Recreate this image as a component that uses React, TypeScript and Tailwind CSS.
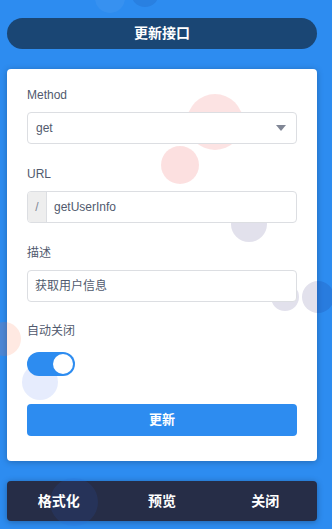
import React from "react";

const Bubble = ({ x, y, r, color }: { x: number; y: number; r: number; color: string }) => (
  <div
    className="absolute rounded-full pointer-events-none z-10"
    style={{ left: x - r, top: y - r, width: r * 2, height: r * 2, background: color }}
  />
);

const Label = ({ children }: { children: React.ReactNode }) => (
  <div className="h-[18px] leading-[18px] text-[12px] text-[#515a6e] mb-[8px]">{children}</div>
);

export default function App() {
  return (
    <div
      className="relative w-[332px] min-h-[529px] bg-[#2d8cf0] overflow-hidden"
      style={{ fontFamily: '"Liberation Sans", "Noto Sans CJK SC", sans-serif' }}
    >
      <Bubble x={110} y={-2} r={15} color="rgba(255,255,255,0.05)" />
      <Bubble x={145} y={-7} r={14} color="rgba(20,40,120,0.12)" />
      <Bubble x={215} y={122} r={28} color="rgba(237,64,64,0.15)" />
      <Bubble x={180} y={165} r={19} color="rgba(237,64,64,0.16)" />
      <Bubble x={249} y={224} r={18} color="rgba(20,10,100,0.12)" />
      <Bubble x={285} y={297} r={14} color="rgba(20,10,100,0.12)" />
      <Bubble x={318} y={297} r={16} color="rgba(20,10,100,0.12)" />
      <Bubble x={4} y={339} r={17} color="rgba(255,110,60,0.15)" />
      <Bubble x={40} y={382} r={18} color="rgba(60,110,240,0.13)" />
      <Bubble x={74} y={502} r={24} color="rgba(45,100,220,0.12)" />

      <div className="w-[310px] ml-[7px] pt-[18px] pb-[8px]">
        <div className="relative z-20 h-[31px] rounded-full bg-[#1a4674] flex items-center justify-center text-white text-[14px] font-bold">
          更新接口
        </div>

        <div className="mt-[20px] bg-white rounded-[4px] shadow-[0_1px_6px_rgba(0,0,0,0.25)] px-[20px] pt-[17px] pb-[25px] flex flex-col">
          <div className="relative z-20">
            <Label>Method</Label>
            <div className="h-[32px] border border-[#dcdee2] rounded-[4px] bg-white flex items-center justify-between pl-[8px] pr-[10px] text-[12px] text-[#515a6e]">
              <span>get</span>
              <svg width="10" height="6" viewBox="0 0 10 6">
                <path d="M0 0 L10 0 L5 6 Z" fill="#808695" />
              </svg>
            </div>
          </div>

          <div className="relative z-20 mt-[21px]">
            <Label>URL</Label>
            <div className="h-[32px] border border-[#dcdee2] rounded-[4px] bg-white flex text-[12px] text-[#515a6e] overflow-hidden">
              <div className="w-[19px] bg-[#eeeeee] border-r border-[#dcdee2] flex items-center justify-center text-[#808695]">
                /
              </div>
              <div className="flex items-center pl-[7px]">getUserInfo</div>
            </div>
          </div>

          <div className="relative z-20 mt-[21px]">
            <Label>描述</Label>
            <div className="h-[32px] border border-[#dcdee2] rounded-[4px] bg-white flex items-center pl-[7px] text-[12px] text-[#515a6e]">
              获取用户信息
            </div>
          </div>

          <div className="relative z-20 mt-[20px]">
            <div className="h-[18px] leading-[18px] text-[12px] text-[#515a6e]">自动关闭</div>
            <div className="mt-[12px] w-[48px] h-[24px] rounded-full bg-[#2d8cf0] flex items-center justify-end pr-[2px]">
              <div className="w-[20px] h-[20px] rounded-full bg-white" />
            </div>
          </div>

          <div className="relative z-20 mt-[28px] h-[32px] rounded-[4px] bg-[#2d8cf0] flex items-center justify-center text-white text-[13px] font-bold">
            更新
          </div>
        </div>

        <div className="mt-[20px] h-[40px] rounded-[4px] bg-[#262d47] shadow-[0_1px_6px_rgba(0,0,0,0.3)] flex items-center text-white text-[14px] font-bold">
          <div className="relative z-20 flex-1 text-center">格式化</div>
          <div className="relative z-20 flex-1 text-center">预览</div>
          <div className="relative z-20 flex-1 text-center">关闭</div>
        </div>
      </div>
    </div>
  );
}
